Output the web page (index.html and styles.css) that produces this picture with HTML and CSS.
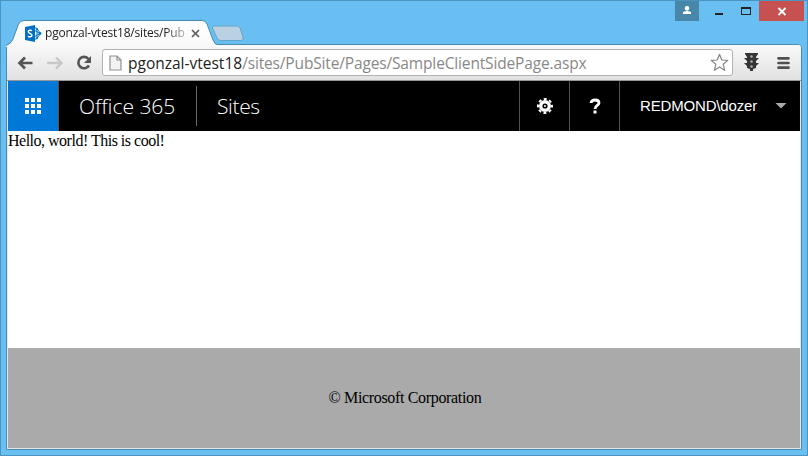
FILE: index.html
```html
<!DOCTYPE html>
<html lang="en">
<head>
<meta charset="utf-8">
<title>pgonzal-vtest18/sites/PubSite</title>
<link rel="stylesheet" href="styles.css">
</head>
<body>
<div class="window">
  <header class="titlebar">
    <div class="tab">
      <svg class="tab-shape" width="211" height="27" viewBox="0 0 211 27">
        <defs><linearGradient id="tabfill" x1="0" y1="0" x2="0" y2="1"><stop offset="0" stop-color="#fff"/><stop offset="1" stop-color="#f9f9f9"/></linearGradient></defs>
        <path d="M0 27V25.5Q5 24 7 19L12.500 4Q14 .5 18 .5H196Q199.500 .5 201 4L207 20Q209 24.500 211 24.500V27Z" fill="url(#tabfill)"/>
        <path d="M0 25.500Q5 24 7 19L12.500 4Q14 .5 18 .5H196Q199.500 .5 201 4L207 20Q209 24.500 211 24.500" fill="none" stroke="#478aaf"/>
      </svg>
      <svg class="tab-icon" width="17" height="17" viewBox="0 0 17 17">
        <g fill="none" stroke="#0072c6" stroke-width="1"><path d="M9 3h2.500l4 5.500-4 5.500H9M9 5l6 3.500L9 12M12 4v9"/></g>
        <circle cx="12" cy="4" r="1.100" fill="#0072c6"/><circle cx="12" cy="13" r="1.100" fill="#0072c6"/><circle cx="15" cy="8.500" r="1.400" fill="#0072c6"/>
        <path d="M0 2L10 0V17L0 15Z" fill="#0072c6"/>
        <path d="M7 5.700C5.500 4.900 3.300 5 3.300 6.700C3.300 8.500 6.900 8.200 6.900 10.300C6.900 12.100 4.500 12.200 3 11.300" fill="none" stroke="#fff" stroke-width="1.500"/>
      </svg>
      <span class="tab-title">pgonzal-vtest18/sites/Pub</span>
      <svg class="tab-close" width="9" height="9" viewBox="0 0 9 9"><path d="M1 1l7 7M8 1L1 8" stroke="#5c5c5c" stroke-width="1.700"/></svg>
    </div>
    <svg class="new-tab" width="34" height="17" viewBox="0 0 34 17"><path d="M3 1H26Q28 1 29 3L32 12Q33 15.500 30 15.500H10Q7 15.500 6 13L1.500 3Q1 1 3 1Z" fill="#b9d1e3" stroke="#65a5ca"/></svg>
    <div class="controls">
      <div class="user"><svg width="24" height="20" viewBox="0 0 24 20"><path d="M12 5a2.300 2.300 0 0 1 2.300 2.300C14.300 8.600 13.200 9.800 12 9.800S9.700 8.600 9.700 7.300A2.300 2.300 0 0 1 12 5ZM8 13V11.500Q8.500 10 12 10T16 11.500V13Z" fill="#fff"/></svg></div>
      <svg class="minmax" width="60" height="20" viewBox="0 0 60 20"><path d="M16 12h8v2h-8z" fill="#222"/><path d="M42 6h10v8H42zM43 8v5h8V8z" fill="#222" fill-rule="evenodd"/></svg>
      <div class="close"><svg width="45" height="20" viewBox="0 0 45 20"><path d="M19.500 7l7 7M26.500 7l-7 7" stroke="#fff" stroke-width="1.900"/></svg></div>
    </div>
  </header>
  <div class="frame">
    <div class="toolbar">
      <svg class="nav-icons" width="95" height="35" viewBox="0 0 95 35">
        <path d="M18 12.500L12.500 18L18 23.500M13 18H25.500" fill="none" stroke="#555" stroke-width="2.700"/>
        <path d="M49 12.500L54.500 18L49 23.500M54 18H40" fill="none" stroke="#c8c8c8" stroke-width="2.400"/>
        <path d="M81.500 14A5.700 5.700 0 1 0 82 20.500" fill="none" stroke="#555" stroke-width="2.600"/><path d="M84 11v7h-7z" fill="#555"/>
      </svg>
      <div class="address">
        <svg class="page-icon" width="13" height="16" viewBox="0 0 13 16"><path d="M1 1h7l4 4v10H1ZM8 1v4h4" fill="#f3f3f3" stroke="#929292" stroke-width="1.200"/></svg>
        <span class="url"><b>pgonzal-vtest18</b>/sites/PubSite/Pages/SampleClientSidePage.aspx</span>
        <svg class="star" width="19" height="19" viewBox="0 0 19 19"><path d="M9.500 1.300l2.300 5.700 6 .4-4.600 3.900 1.500 6-5.200-3.300-5.200 3.300 1.500-6L1.200 7.400l6-.4Z" fill="#fff" stroke="#858585" stroke-width="1.200" stroke-linejoin="round"/></svg>
      </div>
      <svg class="tools" width="67" height="35" viewBox="0 0 67 35">
        <path d="M12 8h13v1l-2 3v1h3l-3 3v2h3l-3 3v2l-3 1v2h-3v-2l-3-1v-2l-3-3h3v-2l-3-3h3v-1l-2-3V8Z" fill="#353535"/>
        <g fill="#aaa"><circle cx="18.500" cy="11.500" r="1.300"/><circle cx="18.500" cy="16.500" r="1.300"/><circle cx="18.500" cy="21.500" r="1.300"/></g>
        <path d="M45.500 13.300h10M45.500 18h10M45.500 22.700h10" stroke="#505050" stroke-width="2.700" stroke-linecap="round"/>
      </svg>
    </div>
    <main class="page">
      <nav class="suite">
        <div class="launcher"><i></i><i></i><i></i><i></i><i></i><i></i><i></i><i></i><i></i></div>
        <div class="brand"><span class="office">Office 365</span></div>
        <div class="sites"><span class="sites-text">Sites</span></div>
        <div class="action"><svg width="16" height="16" viewBox="0 0 16 16"><circle cx="8" cy="8" r="4.300" fill="none" stroke="#fff" stroke-width="3.400"/><circle cx="8" cy="8" r="7" fill="none" stroke="#fff" stroke-width="2" stroke-dasharray="3 2.498" stroke-dashoffset="1.500"/><circle cx="8" cy="8" r="1" fill="#fff"/></svg></div>
        <div class="action"><svg width="12" height="16" viewBox="0 0 12 16"><path d="M2 5Q2 2 6 2Q10 2 10 5C10 7.500 6 7.500 6 11" fill="none" stroke="#fff" stroke-width="2.800"/><path d="M4.500 12.500h3v3h-3z" fill="#fff"/></svg></div>
        <div class="account"><span class="account-name">REDMOND\dozer</span><svg width="12" height="6" viewBox="0 0 12 6"><path d="M.5 0h11L6 5.500Z" fill="#aaa"/></svg></div>
      </nav>
      <p class="content"><span class="hello">Hello, world! This is cool!</span></p>
      <footer class="footer"><span class="copyright">© Microsoft Corporation</span></footer>
    </main>
  </div>
</div>
</body>
</html>
```
FILE: styles.css
```css
* { box-sizing: border-box; }
body { margin: 0; overflow: hidden; }
svg { display: block; flex: none; }
.window { width: 808px; height: 456px; background: #69bff1; border: 1px solid #4b94bf; font-family: "Open Sans", sans-serif; }
.titlebar { display: flex; height: 43px; }
.tab { position: relative; z-index: 1; display: flex; align-items: center; width: 211px; height: 26px; margin: 19px 0 0 5px; padding-left: 19px; }
.tab-shape { position: absolute; left: 0; top: 0; }
.tab-icon { position: relative; }
.tab-title { position: relative; width: 143px; margin-left: 3px; white-space: nowrap; font-size: 12px; letter-spacing: -.2px; line-height: 18px; color: #222; -webkit-mask-image: linear-gradient(90deg, #000 120px, rgba(0,0,0,.2) 143px); mask-image: linear-gradient(90deg, #000 120px, rgba(0,0,0,.2) 143px); }
.tab-close { position: relative; margin-left: 3px; }
.new-tab { margin: 24px 0 0 -6px; }
.controls { display: flex; margin-left: auto; padding-right: 3px; height: 20px; }
.user { width: 24px; background: #4886aa; }
.minmax { width: 60px; }
.close { width: 45px; background: #c75050; }
.frame { width: 796px; height: 406px; margin-left: 5px; border: 1px solid #478bb0; border-radius: 4px 4px 1px 1px; background: #e4e6e7; overflow: hidden; }
.toolbar { display: flex; height: 36px; background: linear-gradient(#f9f9f9, #e1e1e1); border-bottom: 1px solid #969696; }
.address { display: flex; align-items: center; width: 631px; height: 27px; margin-top: 4px; padding-left: 6px; background: #fff; border: 1px solid #b2b2b2; border-radius: 3px; }
.url { width: 582px; margin-left: 6px; white-space: nowrap; font-size: 15.500px; letter-spacing: -.15px; line-height: 24px; color: #888; }
.url b { font-weight: 400; letter-spacing: 0; color: #222; }
.page { display: flex; flex-direction: column; width: 792px; height: 367px; margin-left: 1px; background: #fff; }
.suite { display: flex; align-items: center; height: 50px; background: #000; color: #fff; }
.launcher { display: grid; grid-template-columns: repeat(3, 4px); grid-auto-rows: 4px; gap: 2px; align-content: center; justify-content: center; width: 51px; height: 50px; background: #0078d7; border-right: 1px solid #5b5048; }
.launcher i { width: 4px; height: 4px; background: #fff; }
.brand { display: flex; align-items: center; width: 138px; height: 40px; padding-left: 20px; border-right: 1px solid #686868; font-size: 21px; font-weight: 300; white-space: nowrap; }
.sites { flex: 1; padding-left: 20px; font-size: 21px; font-weight: 300; letter-spacing: -.35px; }
.action { display: flex; align-items: center; justify-content: center; width: 50px; height: 50px; border-left: 1px solid #515151; }
.account { display: flex; align-items: center; width: 181px; height: 50px; padding-left: 20px; border-left: 1px solid #515151; font: 15px "Liberation Sans", sans-serif; letter-spacing: -.17px; }
.account-name { width: 135px; margin-top: -2px; white-space: nowrap; }
.content { flex: 1; margin: 0; padding-top: 1px; font: 16px/18px "Liberation Serif", serif; letter-spacing: -.5px; color: #000; }
.footer { display: flex; align-items: center; justify-content: center; height: 100px; padding-left: 2px; background: #aaa; font: 16px "Liberation Serif", serif; letter-spacing: -.34px; color: #000; }
```
